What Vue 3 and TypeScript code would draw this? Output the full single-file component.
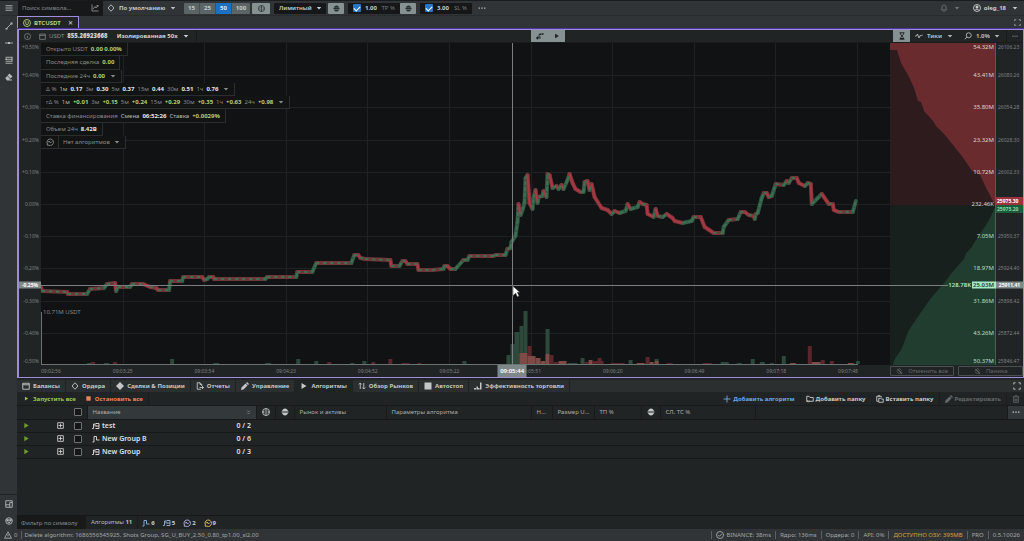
<script setup lang="ts">
import { h, ref } from 'vue'

type Glyph = { s?: string; f?: string }

const glyphs: Record<string, Glyph> = {
  menu: { s: 'M1 3.5H15M1 8H15M1 12.5H15' },
  chart: { s: 'M2 1V14H15M4 10L8 5L10 8L14 3M11 3H14V6' },
  diamond: { s: 'M8 1.5L14 8L8 14.5L2 8Z' },
  diamondFull: { f: 'M8 0L16 8L8 16L0 8Z' },
  caret: { f: 'M2 5H14L8 12Z' },
  globe: { s: 'M8 1A7 7 0 1 0 8 15A7 7 0 1 0 8 1M8 1V15M5 5.5L2.5 8L5 10.5M11 5.5L13.500 8L11 10.5' },
  robot: { f: 'M8 1C11 1 13 3 14 6H2C3 3 5 1 8 1ZM1 7H15V9H1ZM2 10H14C13 13 11 15 8 15S3 13 2 10Z' },
  dots: { f: 'M1 7H4V9.500H1ZM6.500 7H9.500V9.500H6.500ZM12 7H15V9.500H12Z' },
  bell: { s: 'M3 12H13L12 10V6C12 1 4 1 4 6V10ZM6.500 14.500H9.500' },
  user: { s: 'M8 1A7 7 0 1 0 8 15A7 7 0 1 0 8 1M3.500 13C5 9.500 11 9.500 12.500 13', f: 'M8 3A3 3 0 1 0 8 9A3 3 0 1 0 8 3' },
  expand: { s: 'M1.500 5V1.500H5M11 1.500H14.500V5M14.500 11V14.500H11M5 14.500H1.500V11' },
  line: { s: 'M3 13L13 3', f: 'M1 12H5V15H1ZM11 1H15V5H11Z' },
  hline: { s: 'M0 8H16', f: 'M6 6H10V10H6Z' },
  levels: { s: 'M1 2.500H15M1 6.500H15M1 10.500H15M1 14.500H15M14 2V10', f: 'M1 5H4V8H1Z' },
  eraser: { f: 'M9 1L15 7L11 11L5 5ZM4.500 6L10 11.500L8.500 13H14V15H4L1 11V9.500Z' },
  layout: { s: 'M1.500 1.500H14.500V14.500H1.500ZM1.500 9.500H9.500M9.500 5V14.500M9.500 5H14' },
  face: { s: 'M8 1.500A6.500 6.500 0 1 0 8 14.500A6.500 6.500 0 1 0 8 1.500M1 6H15', f: 'M4 5H7V9H4ZM9 5H12V9H9ZM5 10H11L8 13Z' },
  info: { s: 'M8 1A7 7 0 1 0 8 15A7 7 0 1 0 8 1M8 7V12M8 4V5.500' },
  wallet: { s: 'M1.500 2.500H14.500V14.500H1.500ZM1.500 5.500H14.500' },
  hourglass: { s: 'M3 1.500H13M3 14.500H13M4.500 2C4.500 6 11.500 10 11.500 14M11.500 2C11.500 6 4.500 10 4.500 14', f: 'M5 12H11V14H5Z' },
  ticks: { s: 'M0 8H3L5 4L8 12L11 6L13 8L16 5' },
  lens: { s: 'M9.500 1.500A5 5 0 1 0 9.500 11.500A5 5 0 1 0 9.500 1.500M6 10L1.500 14.500' },
  ladder: { s: 'M1 12H6V5H9M8 14V9M10 4H15M3 9V15', f: 'M1 10H4V14H1ZM7 3H10V6H7ZM12 3H15V5H12Z' },
  play: { f: 'M3 2L13 8L3 14Z' },
  square: { f: 'M1 1H15V15H1Z' },
  report: { s: 'M10 14.500H2.500V1.500H8L11.500 5V8M8 1.500V5H11.500M7 11H15M12 8L15 11L12 14' },
  pencil: { f: 'M12 0L16 4L14 6L10 2ZM9 3L13 7L5 15L0 16L1 11Z' },
  arrows: { s: 'M4.500 14V2M1.500 5L4.500 2L7.500 5M11.500 2V14M8.500 11L11.500 14L14.500 11' },
  bars: { f: 'M0 12H4V15H0ZM5 9H8V15H5ZM8 12H11V15H8ZM12 1H15V15H12Z' },
  plus: { s: 'M8 1V15M1 8H15' },
  folder: { s: 'M1.500 2.500H6L8 5H14.500V12.500H5.500M1.500 2.500V12.500H8M4 10.500L2 12.500L4 14.500' },
  paste: { s: 'M5 12.500H1.500V2.500H10.500V5M4 1.500H8M5.500 6.500H9L10.500 8H14.500V14.500H5.500Z' },
  trash: { s: 'M3.500 4.500V14.500H12.500V4.500M1.500 3.500H14.500M6 1.500H10M6.500 7V12M9.500 7V12' },
  boxPlus: { s: 'M1.500 1.500H14.500V14.500H1.500ZM8 3.500V12.500M3.500 8H12.500' },
  sort: { s: 'M4 2L8 6L12 2M4 9L8 13L12 9' },
  step: { s: 'M1 14H4V3H9V10H15' },
  group: { s: 'M0 13H3V4H6V9M8 3H14V13H8M8 8H14', f: 'M7 2H9V4H7ZM7 7H9V9H7ZM7 12H9V14H7Z' },
  wave: { s: 'M2 14L3 12A6.500 6.500 0 1 1 6 14.500ZM4 9L6.500 6L9 10L12 7' },
  warn: { s: 'M8 1.500L15 14.500H1ZM8 6V10M8 11.500V13' },
  check: { s: 'M8 1A7 7 0 1 0 8 15A7 7 0 1 0 8 1M4.500 8L7 10.500L12 5.500' },
  cut: { s: 'M2 2L14 14M3 6L8 1L13 6M2 8L8 14M7 5L12 10M10 13L14 9' },
  coin: { s: 'M8 1A7 7 0 1 0 8 15A7 7 0 1 0 8 1M5.500 4.500V9C5.500 12 10.500 12 10.500 9V4.500' },
}

const Icon = (p: { n: string }) =>
  h('svg', { viewBox: '0 0 16 16', class: 'icon', 'aria-hidden': 'true' }, [
    h('path', { d: glyphs[p.n].s ?? '', fill: 'none', stroke: 'currentColor', 'stroke-width': 1.8 }),
    h('path', { d: glyphs[p.n].f ?? '', fill: 'currentColor' }),
  ])
Icon.props = ['n']

const sizes = ['15', '25', '50', '100']
const size = ref('50')

type Part = [string, string]
const infoRows: { parts: Part[]; caret?: boolean }[] = [
  { parts: [['', 'Открыто USDT'], ['g', '0.00 0.00%']] },
  { parts: [['', 'Последняя сделка'], ['g', '0.00']] },
  { parts: [['', 'Последние 24ч'], ['g', '0.00']], caret: true },
  { parts: [['', 'Δ %'], ['l', '1м'], ['w', '0.17'], ['', '3м'], ['w', '0.30'], ['', '5м'], ['w', '0.37'], ['', '15м'], ['w', '0.44'], ['', '30м'], ['w', '0.51'], ['', '1ч'], ['w', '0.76']], caret: true },
  { parts: [['', 'rΔ %'], ['l', '1м'], ['g', '+0.01'], ['', '3м'], ['g', '+0.15'], ['', '5м'], ['g', '+0.24'], ['', '15м'], ['g', '+0.29'], ['', '30м'], ['g', '+0.35'], ['', '1ч'], ['g', '+0.63'], ['', '24ч'], ['g', '+0.98']], caret: true },
  { parts: [['', 'Ставка финансирования'], ['l', 'Смена'], ['w', '06:52:26'], ['l', 'Ставка'], ['g', '+0.0029%']] },
  { parts: [['', 'Объем 24ч'], ['w', '8.42B']] },
]

const percents = ['+0.50%', '+0.40%', '+0.30%', '+0.20%', '+0.10%', '0.00%', '-0.10%', '-0.20%', '-0.30%', '-0.40%', '-0.50%']
const times = ['09:02:56', '09:03:25', '09:03:54', '09:04:23', '09:04:52', '09:05:22', '09:05:51', '09:06:20', '09:06:49', '09:07:18', '09:07:48']
const volumes = ['54.32M', '43.41M', '35.80M', '23.32M', '10.72M', '232.46K', '7.05M', '18.97M', '31.86M', '43.26M', '50.37M']
const prices = ['26106.23', '26080.26', '26054.28', '26028.30', '26002.33', '', '25950.37', '25924.40', '25898.42', '25872.44', '25846.47']

const series: [number, number][] = [
  [0, 244], [1, 248], [26, 249], [27, 251], [46, 251], [49, 246], [63, 245], [66, 241], [74, 240], [75, 248], [77, 244], [89, 244], [91, 241], [102, 241], [109, 244], [115, 245], [117, 247], [128, 247], [129, 238], [141, 238], [142, 234], [161, 234], [163, 237], [166, 236], [168, 234], [172, 234], [173, 236],
  [224, 236], [226, 234], [255, 234], [256, 229], [271, 229], [275, 220], [310, 220], [313, 212], [317, 212], [319, 215], [324, 216], [349, 217], [350, 223], [358, 223], [361, 218], [364, 218], [366, 221], [376, 221], [377, 227], [391, 227], [402, 226], [403, 223], [406, 223], [409, 226], [414, 226], [422, 217], [426, 217], [428, 213], [452, 213], [454, 212], [464, 212],
  [466, 206], [469, 205], [470, 199], [474, 193], [476, 179], [477, 161], [479, 172], [481, 167], [483, 160], [484, 135], [486, 132], [488, 160], [491, 166], [492, 155], [494, 147], [496, 160], [497, 154], [501, 153], [502, 148], [505, 154], [506, 131], [508, 132], [511, 145], [515, 143], [517, 146], [520, 142], [522, 146], [526, 137], [528, 131], [531, 140], [534, 146], [539, 149], [542, 149], [543, 139], [546, 138], [548, 147], [550, 141], [553, 154], [560, 165], [566, 167], [570, 171], [573, 168], [578, 170], [584, 168], [586, 161], [589, 166], [596, 164], [598, 159], [601, 161], [605, 162], [606, 171], [612, 174], [614, 166], [616, 173], [621, 174], [625, 171], [631, 175], [633, 178], [641, 180], [650, 178], [652, 174], [659, 174], [663, 184], [672, 190],
  [681, 190], [682, 184], [687, 177], [696, 176], [699, 169], [703, 169], [707, 172], [712, 173], [713, 176], [714, 171], [716, 170], [720, 155], [722, 150], [725, 150], [727, 154], [730, 153], [734, 141], [742, 142], [745, 138], [747, 140], [750, 135], [755, 135], [757, 140], [763, 143], [766, 140], [769, 141], [770, 161], [780, 151], [787, 161], [791, 161], [792, 167], [797, 169], [811, 169], [814, 158],
]
const segments = series.slice(1).map((p, i) => {
  const q = series[i]
  const dy = p[1] - q[1]
  return { d: `M${q[0]} ${q[1]}L${p[0]} ${p[1]}`, kind: dy <= -2 ? 'up' : dy >= 2 ? 'down' : 'flat' }
})

const volumeBars: [number, number, number, string][] = [
  [0, 1, 5, 'r'], [46, 6, 1, 'g'], [50, 4, 2, 'r'], [63, 5, 1, 'g'], [72, 4, 2, 'r'], [129, 4, 5, 'g'], [172, 6, 1, 'g'], [224, 6, 1, 'g'], [255, 4, 5, 'g'], [273, 4, 3, 'g'], [286, 4, 2, 'r'], [309, 4, 1, 'g'], [321, 4, 3, 'g'], [330, 4, 2, 'r'], [347, 4, 5, 'r'], [360, 8, 1, 'r'], [376, 4, 1, 'r'], [421, 4, 3, 'g'],
  [465, 4, 9, 'g'], [469, 5, 20, 'g'], [473, 5, 32, 'g'], [478, 4, 38, 'g'], [482, 4, 53, 'g'], [478, 8, 11, 'm'], [486, 4, 18, 'r'], [486, 8, 8, 'm'], [494, 5, 6, 'm'], [499, 5, 3, 'm'], [504, 4, 35, 'g'], [504, 4, 10, 'm'], [508, 4, 9, 'r'], [512, 5, 2, 'r'],
  [517, 8, 3, 'm'], [526, 10, 1, 'g'], [539, 4, 6, 'g'], [543, 4, 2, 'r'], [547, 4, 4, 'm'], [551, 11, 3, 'r'], [556, 4, 6, 'r'], [569, 14, 1, 'r'], [587, 4, 4, 'g'], [595, 8, 1, 'm'], [604, 4, 7, 'r'], [608, 4, 2, 'm'], [613, 4, 5, 'g'], [613, 4, 3, 'm'], [625, 6, 1, 'r'], [661, 9, 1, 'r'], [679, 8, 2, 'g'], [695, 5, 1, 'g'], [709, 4, 5, 'g'], [718, 5, 2, 'g'], [728, 4, 1, 'g'], [740, 4, 8, 'g'], [748, 6, 1, 'm'], [766, 4, 18, 'r'], [770, 9, 2, 'm'], [779, 4, 4, 'r'], [788, 4, 3, 'r'], [806, 6, 1, 'm'], [814, 4, 3, 'g'],
]

const tabs = [
  { icon: 'wallet', label: 'Балансы' }, { icon: 'diamond', label: 'Ордера' }, { icon: 'diamondFull', label: 'Сделки & Позиции' },
  { icon: 'report', label: 'Отчеты' }, { icon: 'pencil', label: 'Управление' }, { icon: 'play', label: 'Алгоритмы' },
  { icon: 'arrows', label: 'Обзор Рынков' }, { icon: 'square', label: 'Автостоп' }, { icon: 'bars', label: 'Эффективность торговли' },
]
const activeTab = ref('Алгоритмы')

const groups = [
  { name: 'test', count: '0 / 2', icon: 'group' },
  { name: 'New Group B', count: '0 / 6', icon: 'step' },
  { name: 'New Group', count: '0 / 3', icon: 'group' },
]
const counters = [
  { icon: 'step', n: 6, tone: 'blue' }, { icon: 'group', n: 5, tone: 'blue' }, { icon: 'wave', n: 2, tone: 'lilac' }, { icon: 'wave', n: 9, tone: 'amber' },
]
</script>

<template>
  <div class="app">
    <header class="topbar">
      <button class="menu-btn" aria-label="Меню"><Icon n="menu" /></button>
      <label class="search"><input type="text" placeholder="Поиск символа..." aria-label="Поиск символа" /><Icon n="chart" /></label>
      <label class="drop preset"><Icon n="diamond" /><select aria-label="Шаблон"><option>По умолчанию</option></select><Icon n="caret" class="car" /></label>
      <div class="sizes">
        <button v-for="s in sizes" :key="s" :class="{ on: s === size }" @click="size = s">{{ s }}</button>
      </div>
      <button class="tool wide" aria-label="Валюта"><Icon n="globe" /></button>
      <label class="drop order"><select aria-label="Тип ордера"><option>Лимитный</option></select><Icon n="caret" class="car" /></label>
      <button class="tool" aria-label="Бот"><Icon n="robot" /></button>
      <div class="risk"><input type="checkbox" checked aria-label="Включить TP" /><input type="text" value="1.00" aria-label="TP %" /><span>TP %</span></div>
      <button class="tool flush" aria-label="Бот TP"><Icon n="robot" /></button>
      <div class="risk"><input type="checkbox" checked aria-label="Включить SL" /><input type="text" value="3.00" aria-label="SL %" /><span>SL %</span></div>
      <button class="more" aria-label="Ещё"><Icon n="dots" /></button>
      <button class="bell" aria-label="Уведомления"><Icon n="bell" /><Icon n="caret" class="car" /></button>
      <button class="account"><Icon n="user" />oleg_18<Icon n="caret" class="car" /></button>
    </header>

    <div class="body">
      <nav class="side" aria-label="Инструменты">
        <button aria-label="Линия"><Icon n="line" /></button>
        <button aria-label="Горизонталь"><Icon n="hline" /></button>
        <button aria-label="Уровни"><Icon n="levels" /></button>
        <button aria-label="Стереть"><Icon n="eraser" /></button>
        <div class="side-end">
          <button aria-label="Раскладка"><Icon n="layout" /></button>
          <button aria-label="Робот"><Icon n="face" /></button>
        </div>
      </nav>

      <main class="work">
        <div class="symbols">
          <div class="symbol"><Icon n="coin" /><span>BTCUSDT</span><button aria-label="Закрыть">✕</button></div>
          <button class="full" aria-label="Развернуть"><Icon n="expand" /></button>
        </div>

        <section class="frame">
          <div class="chart-bar">
            <div class="balance">
              <Icon n="info" class="dim" /><Icon n="wallet" class="dim" /><span class="cur">USDT</span><b>855.26923668</b>
              <label class="drop margin"><select aria-label="Маржа"><option>Изолированная 50x</option></select><Icon n="caret" class="car" /></label>
            </div>
            <div class="modes"><button aria-label="Лестница"><Icon n="ladder" /></button><button aria-label="Пуск"><Icon n="play" /></button></div>
            <div class="scale">
              <button class="hour" aria-label="Ожидание"><Icon n="hourglass" /></button>
              <label class="drop"><Icon n="ticks" /><select aria-label="Интервал"><option>Тики</option></select><Icon n="caret" class="car" /></label>
              <label class="drop"><Icon n="lens" /><select aria-label="Масштаб"><option>1.0%</option></select><Icon n="caret" class="car" /></label>
              <button class="opts" aria-label="Ещё"><Icon n="dots" /></button>
            </div>
          </div>

          <div class="chart">
            <div class="axis percent"><span v-for="p in percents" :key="p">{{ p }}</span><b class="mark">-0.25%</b></div>

            <div class="plot">
              <svg viewBox="0 0 848 322" preserveAspectRatio="none" role="img" aria-label="График цены BTCUSDT">
                <g class="grid">
                  <path v-for="i in 9" :key="'h' + i" :d="`M0 ${Math.round(i * 32.2)}H848`" />
                  <path v-for="i in 10" :key="'v' + i" :d="`M${Math.round(i * 81.6)} 0V322`" />
                </g>
                <rect v-for="(b, i) in volumeBars" :key="'b' + i" :x="b[0]" :y="321 - b[2]" :width="b[1]" :height="b[2]" :class="'bar-' + b[3]" />
                <path class="base" d="M0 269V321H816" />
                <path v-for="(s, i) in segments" :key="'s' + i" :d="s.d" :class="['seg', s.kind]" />
                <path v-for="(s, i) in segments" :key="'d' + i" :d="s.d" :class="['dash', s.kind]" />
              </svg>
              <div class="info">
                <div v-for="(r, i) in infoRows" :key="i" class="info-row">
                  <span v-for="(p, j) in r.parts" :key="j" :class="p[0]">{{ p[1] }}</span><Icon v-if="r.caret" n="caret" class="car" />
                </div>
                <div class="info-row algo">
                  <button aria-label="Сигналы"><Icon n="wave" /></button>
                  <label class="drop"><select aria-label="Алгоритмы"><option>Нет алгоритмов</option></select><Icon n="caret" class="car" /></label>
                </div>
              </div>
              <span class="peak">10.71M USDT</span>
            </div>

            <div class="depth">
              <svg viewBox="0 0 106 322" preserveAspectRatio="none" role="img" aria-label="Глубина рынка">
                <rect width="106" height="162" fill="#2d1b1d" /><rect y="162" width="106" height="160" fill="#17201c" />
                <path fill="#6a2b2f" d="M0 0H106V162L104 160L96 145L90 132L82 128L71 112L54 91L46 83L43 78L34 68L31 59L28 58L24 45L19 34L11 20L7 7H0Z" />
                <path fill="#213d2f" d="M106 162L104 166L101 173L96 182L89 192L81 205L76 210L74 216L64 227L54 240L41 255L31 269L21 284L18 289L14 300L11 307L4 317L3 322H106Z" />
                <rect x="105" width="1" height="162" fill="#b03a44" /><rect x="105" y="162" width="1" height="160" fill="#2f7a50" />
              </svg>
              <div class="axis vol"><span v-for="v in volumes" :key="v">{{ v }}</span></div>
              <div class="hover-vol"><b>128.78K</b><b class="hl">25.03M</b></div>
            </div>

            <div class="axis price">
              <span v-for="(p, i) in prices" :key="i">{{ p }}</span>
              <div class="quote"><b class="ask">25975.30</b><b class="bid">25975.20</b></div>
              <b class="mark">25911.41</b>
            </div>

            <div class="corner"></div>
            <div class="time-row">
              <div class="times"><span v-for="t in times" :key="t">{{ t }}</span></div>
              <b class="time-mark">09:05:44</b>
            </div>
            <div class="panic">
              <button disabled><Icon n="cut" />Отменить все</button>
              <button disabled><Icon n="cut" />Паника</button>
            </div>

            <div class="cross">
              <i class="cross-v"></i><i class="cross-h"></i>
              <svg class="pointer" viewBox="0 0 10 14"><path d="M1 1V12L4 9L6 13L8 12L6 8H9Z" fill="#fff" stroke="#111" stroke-width=".6" /></svg>
            </div>
          </div>
        </section>

        <section class="panel">
          <div class="tabs">
            <button v-for="t in tabs" :key="t.label" :class="{ on: t.label === activeTab }" @click="activeTab = t.label"><Icon :n="t.icon" />{{ t.label }}</button>
            <button class="full" aria-label="Развернуть"><Icon n="expand" /></button>
          </div>
          <div class="actions">
            <button class="run"><Icon n="play" />Запустить все</button>
            <button class="stop"><Icon n="square" />Остановить все</button>
            <span class="gap"></span>
            <button class="add"><Icon n="plus" />Добавить алгоритм</button>
            <button class="join"><Icon n="folder" />Добавить папку</button>
            <button><Icon n="paste" />Вставить папку</button>
            <button disabled><Icon n="pencil" />Редактировать</button>
            <button disabled aria-label="Удалить"><Icon n="trash" /></button>
          </div>
          <div class="table-box">
            <table>
              <colgroup><col class="c0" /><col class="c1" /><col class="c2" /><col class="c3" /><col class="c4" /><col class="c5" /><col class="c6" /><col class="c7" /><col class="c8" /><col class="c9" /><col class="c10" /><col class="c11" /><col /><col class="c13" /></colgroup>
              <thead>
                <tr>
                  <th class="nb"></th><th><input type="checkbox" aria-label="Выбрать все" /></th>
                  <th class="name"><div class="cell"><span>Название</span><Icon n="sort" /></div></th>
                  <th class="mid"><Icon n="globe" /></th><th class="mid"><Icon n="robot" /></th>
                  <th>Рынок и активы</th><th>Параметры алгоритма</th><th>Н...</th><th>Размер U...</th><th>ТП %</th>
                  <th class="mid"><Icon n="robot" /></th><th>СЛ, ТС %</th><th></th><th class="name mid"><Icon n="dots" /></th>
                </tr>
              </thead>
              <tbody>
                <tr v-for="g in groups" :key="g.name">
                  <td><div class="lead"><button class="go" :aria-label="'Запустить ' + g.name"><Icon n="play" /></button><button :aria-label="'Раскрыть ' + g.name"><Icon n="boxPlus" /></button></div></td>
                  <td><input type="checkbox" :aria-label="g.name" /></td>
                  <td><div class="cell"><Icon :n="g.icon" /><span>{{ g.name }}</span><span class="count">{{ g.count }}</span></div></td>
                  <td colspan="11"></td>
                </tr>
              </tbody>
            </table>
          </div>
          <div class="filter">
            <input type="text" placeholder="Фильтр по символу" aria-label="Фильтр по символу" />
            <span class="total">Алгоритмы <b>11</b></span>
            <span v-for="(c, i) in counters" :key="i" :class="['counter', c.tone]"><Icon :n="c.icon" /><b>{{ c.n }}</b></span>
          </div>
        </section>
      </main>
    </div>

    <footer class="status">
      <span class="warns"><Icon n="warn" />0</span>
      <span class="msg">Delete algorithm: 1686556545925, Shots Group, SG_U_BUY_2.50_0.80_tp1.00_sl2.00</span>
      <span class="st"><Icon n="check" />BINANCE: 38ms</span><span class="st">Ядро: 136ms</span><span class="st">Ордера: 0</span><span class="st">API: 0%</span>
      <span class="st ram">ДОСТУПНО ОЗУ: 395MB</span><span class="st">PRO</span><span class="st">0.5.10026</span>
    </footer>
  </div>
</template>

<style>
body { margin: 0; background: #1a1c1c; }
</style>

<style scoped>
.app { display: flex; flex-direction: column; height: 100vh; min-height: 360px; overflow: hidden; background: #212424; color: #c9cccb; font: 6px/8px "Noto Sans", "Open Sans", sans-serif; box-sizing: border-box; border-top: 1px solid #191c1d; }
.app *, .app :deep(*) { box-sizing: border-box; }
button, input, select { font: inherit; color: inherit; background: none; border: 0; border-radius: 0; padding: 0; margin: 0; min-width: 0; }
button { display: flex; align-items: center; justify-content: center; cursor: pointer; white-space: nowrap; }
input, select { outline: none; }
input::placeholder { color: #85898a; opacity: 1; }
select { appearance: none; }
option { background: #212424; }
.icon { width: 8px; height: 8px; flex: none; display: block; }
.car { width: 6px; height: 6px; }
.drop { display: flex; align-items: center; gap: 4px; font-weight: 700; }
.dim { color: #7f8384; }

.topbar { display: flex; align-items: center; flex: none; height: 15px; background: #303436; font-weight: 700; border-bottom: 1px solid #282c2d; }
.menu-btn { width: 18px; color: #b4b8b8; }
.search { display: flex; align-items: center; width: 85px; height: 15px; padding: 0 4px; background: #161819; font-weight: 400; }
.search input { flex: 1; }
.search .icon { color: #8a8f90; }
.preset { margin-left: 4px; color: #c3c7c7; }
.sizes { display: flex; margin-left: 8px; background: #5b6566; border-radius: 1px; }
.sizes button { width: 16px; height: 11px; border-right: 1px solid #464e50; color: #c7cccc; }
.sizes button:last-child { width: 18px; border: 0; }
.sizes .on { background: #1c70c2; color: #dcecff; }
.tool { width: 16px; height: 11px; margin-left: 2px; background: #869292; color: #2a3031; border-radius: 1px; }
.tool .icon { width: 7px; height: 7px; }
.wide { width: 18px; }
.flush { margin-left: 0; }
.order { width: 52px; height: 11px; padding: 0 4px 0 5px; margin-left: 4px; background: #151718; border-radius: 1px; justify-content: space-between; gap: 0; font-weight: 600; }
.risk { display: flex; align-items: center; gap: 4px; width: 52px; height: 11px; margin-left: 4px; padding: 0 5px; background: #151718; border-radius: 1px; }
.risk input[type='text'] { width: 13px; }
.risk span { color: #777b7c; font-weight: 400; white-space: nowrap; }
input[type='checkbox'] { appearance: none; display: block; width: 8px; height: 8px; border: 1px solid #6f7475; border-radius: 1px; background: #141616; }
.risk input[type='checkbox'] { flex: none; border: 0; background: #2a76c6; display: grid; place-items: center; }
.risk input[type='checkbox']::after { content: ''; width: 5px; height: 3px; border: solid #fff; border-width: 0 0 1px 1px; transform: rotate(-45deg); }
.more { margin-left: 6px; color: #a7abab; }
.bell { margin-left: auto; gap: 6px; color: #6f7475; }
.account { gap: 3px; margin: 0 6px 0 13px; }
.account .car { margin-left: 3px; }

.body { display: flex; flex: 1; min-height: 0; }
.side { display: flex; flex-direction: column; width: 17px; flex: none; padding-top: 1px; background: #303436; color: #b4b8b8; }
.side button { height: 17px; width: 100%; }
.side-end { margin-top: auto; border-top: 1px solid #212424; }
.work { display: grid; grid-template-rows: 13px minmax(0, 349fr) minmax(0, 151fr); flex: 1; min-width: 0; }

.symbols { display: flex; background: #303436; }
.symbol { display: flex; align-items: center; gap: 3px; padding: 0 5px; border: 1px solid #a18cdc; border-bottom: 0; background: #212424; color: #b5cf7a; font-weight: 700; width: 62px; }
.symbol button { margin-left: auto; color: #b4b8b8; }
.full { width: 14px; margin-left: auto; color: #a7abab; }
.full .icon { width: 7px; height: 7px; }
.frame { display: flex; flex-direction: column; border: 1px solid #a18cdc; border-left-width: 2px; background: #212424; min-height: 0; box-shadow: 0 -1px 0 #4a34a0; }
.chart-bar { position: relative; display: flex; flex: none; justify-content: space-between; height: 13px; font-weight: 700; border-bottom: 1px solid #1a1c1c; }
.balance { display: flex; align-items: center; gap: 3px; padding: 0 7px 0 5px; border-right: 1px solid #1a1c1c; color: #d0d4d4; }
.balance > .icon { width: 7px; height: 7px; margin-right: 5px; }
.balance > .icon + .icon { margin-right: 0; }
.cur { color: #8b8f90; font-weight: 400; }
.margin { margin-left: 6px; }
.modes { position: absolute; left: 51%; top: 0; height: 12px; display: flex; background: #869292; color: #1b1e1e; }
.modes button { width: 17px; }
.modes button + button .icon { width: 6px; height: 6px; }
.scale { display: flex; align-items: center; color: #b4b8b8; }
.scale .drop { padding: 0 6px 0 5px; }
.hour { width: 17px; height: 12px; background: #869292; color: #1b1e1e; }
.opts { width: 17px; height: 12px; border-left: 1px solid #1a1c1c; }
.opts .icon { width: 6px; }

.chart { position: relative; display: grid; grid-template-columns: 22px minmax(0, 848fr) minmax(0, 106fr) 27px; grid-template-rows: minmax(0, 1fr) 12px; flex: 1; min-height: 0; }
.axis { position: relative; display: grid; grid-template-rows: minmax(0, 1fr) repeat(9, minmax(0, 2fr)) minmax(0, 1fr); align-items: center; font-size: 5px; color: #7d8182; white-space: nowrap; }
.axis > span:first-child { align-self: start; }
.axis > span:last-of-type { align-self: end; }
.percent { text-align: right; padding-right: 2px; }
.mark { position: absolute; left: 0; right: 0; top: 75%; transform: translateY(-50%); background: #7f8889; color: #fff; font-weight: 700; line-height: 7px; text-align: center; }
.plot { position: relative; background: #111213; min-width: 0; }
.plot > svg, .depth > svg { display: block; width: 100%; height: 100%; position: absolute; inset: 0; }
.grid path { stroke: #1f2122; stroke-width: 1; fill: none; shape-rendering: crispEdges; }
.base { stroke: #6a7272; stroke-width: 1; fill: none; shape-rendering: crispEdges; }
.bar-g { fill: #2c493b; }
.bar-r { fill: #5b262b; }
.bar-m { fill: #7d4a45; }
.seg { fill: none; stroke-width: 4; stroke-linecap: round; }
.seg.up { stroke: #315b45; }
.seg.down { stroke: #86323a; }
.seg.flat { stroke: #6e383a; }
.dash { fill: none; stroke-width: 2; }
.dash.up { stroke: #3c7052; stroke-dasharray: 4 2; }
.dash.down { stroke: #a63a44; }
.dash.flat { stroke: #3f7052; stroke-dasharray: 3 4; }
.info { position: absolute; left: 0; top: 0; height: 33%; display: grid; grid-template-rows: repeat(8, minmax(0, 1fr)); justify-items: start; z-index: 2; color: #868a8b; }
.info-row { display: flex; align-items: center; gap: 3px; padding: 0 5px; border: 1px solid #2b2e2f; border-top-width: 0; border-left: 0; background: #121414; white-space: nowrap; }
.info-row .car { margin-left: 2px; }
.info .g { color: #b3cf74; font-weight: 700; }
.info .w { color: #e4e6e6; font-weight: 700; }
.info .l { color: #b5b9b9; }
.algo { padding: 0; gap: 0; }
.algo button { width: 18px; height: 100%; border-right: 1px solid #2b2e2f; }
.algo .drop { padding: 0 5px 0 4px; font-weight: 400; }
.algo .drop .car { margin: 0; }
.peak { position: absolute; left: 2px; top: 83%; transform: translateY(-50%); color: #85898a; margin-top: 2px; }

.depth { position: relative; }
.vol { height: 100%; text-align: right; padding-right: 2px; color: #d8d4d4; font-size: 6px; }
.vol span:nth-child(n + 7) { color: #b8dcc6; }
.hover-vol { position: absolute; right: 0; top: 75%; transform: translateY(-50%); display: flex; gap: 1px; line-height: 7px; color: #a9e6c4; font-weight: 600; z-index: 3; }
.hl { background: #a4ecc4; color: #1f3a2c; padding: 0 2px 0 1px; }
.hover-vol b { font-weight: 600; }
.price { padding-left: 2px; }
.quote { position: absolute; left: 0; right: 0; top: 50%; transform: translateY(-50%); margin-top: 1px; color: #fff; }
.quote b { display: block; font-weight: 700; padding-left: 1px; }
.ask { background: #9c3440; }
.bid { color: #7fdba6; background: #1f5a3b; }
.time-row { position: relative; padding-right: 32px; min-width: 0; }
.times { display: grid; grid-template-columns: minmax(0, 1fr) repeat(9, minmax(0, 2fr)) minmax(0, 1fr); font-size: 5px; line-height: 12px; color: #7d8182; }
.times span { justify-self: center; }
.times span:first-child { justify-self: start; }
.times span:last-child { justify-self: end; }
.time-mark { position: absolute; left: 55.5%; top: 0; transform: translateX(-50%); width: 29px; text-align: center; line-height: 12px; background: #7f8889; color: #fff; font-weight: 600; }
.panic { grid-column: 3 / 5; display: flex; gap: 4px; padding: 1px 0; }
.panic button { flex: 1; gap: 5px; border: 1px solid #4a4e4f; border-radius: 1px; color: #63696a; }
.panic .icon { width: 7px; height: 7px; }
.cross { position: absolute; left: 22px; right: 27px; top: 0; bottom: 12px; pointer-events: none; }
.cross-v { position: absolute; left: 49.3%; top: 0; bottom: 0; width: 1px; background: #7b7f80; }
.cross-h { position: absolute; left: 0; right: 48px; top: 75%; height: 1px; background: #7b7f80; }
.pointer { position: absolute; left: 49.3%; top: 75%; width: 9px; height: 13px; }

.panel { display: flex; flex-direction: column; min-height: 0; padding-top: 2px; }
.tabs { display: flex; flex: none; height: 12px; background: #2b2f30; font-weight: 700; }
.tabs button { padding: 0 5px; gap: 3px; border-right: 1px solid #202324; color: #c3c7c7; }
.tabs .icon, .actions .icon { width: 8px; height: 8px; }
.tabs .on { background: #212424; }
.tabs .full { border: 0; padding: 0; }
.actions { display: flex; flex: none; height: 14px; font-weight: 700; border-bottom: 1px solid #191b1b; }
.actions button { padding: 0 5px; gap: 2px; border-right: 1px solid #1b1e1e; }
.actions .join { border: 0; }
.actions button:last-child { width: 17px; border: 0; }
.actions .run { padding-left: 7px; gap: 4px; color: #9ecb4d; border: 0; }
.actions .stop { gap: 4px; color: #f0805c; }
.actions .run .icon, .actions .stop .icon { width: 5px; height: 5px; }
.actions .add { color: #6ea8ea; }
.actions button:disabled { color: #63696a; }
.gap { flex: 1; }
.table-box { flex: 1; min-height: 0; overflow: hidden; }
table { width: 100%; border-collapse: collapse; table-layout: fixed; }
th, td { padding: 0 5px; height: 13px; text-align: left; font-weight: 400; border-bottom: 1px solid #171919; white-space: nowrap; }
th { border-right: 1px solid #191b1b; color: #a8acad; }
th:last-child { border-right: 0; }
td { font-size: 7px; font-weight: 600; color: #dfe1e1; }
.name { background: #33383a; }
.nb { border-right: 0; }
.mid { padding: 0; color: #c3c7c7; }
.mid .icon { margin: 0 auto; }
.c0 { width: 52px; } .c1 { width: 18px; } .c2 { width: 169px; } .c3 { width: 19px; } .c4 { width: 19px; } .c5 { width: 92px; } .c6 { width: 145px; } .c7 { width: 21px; } .c8 { width: 42px; } .c9 { width: 47px; } .c10 { width: 19px; } .c11 { width: 95px; } .c13 { width: 17px; }
.cell { display: flex; align-items: center; gap: 2px; }
th .cell { justify-content: space-between; }
th .cell .icon { width: 5px; height: 5px; }
.count { margin-left: auto; }
.lead { display: flex; justify-content: space-between; align-items: center; padding-left: 1px; }
.lead .icon { width: 7px; height: 7px; }
.go { color: #6f9a2c; }
.filter { display: flex; flex: none; align-items: center; height: 14px; border-top: 1px solid #171919; color: #b9bdbd; }
.filter input { width: 69px; height: 13px; padding: 0 4px; background: #181a1a; }
.total { padding: 0 5px; border-right: 1px solid #1a1c1c; line-height: 13px; }
.total b, .counter b { font-weight: 700; }
.counter { display: flex; align-items: center; gap: 1px; padding: 0 4px; }
.counter b { color: #c9cccb; }
.blue { color: #8fb4dc; } .lilac { color: #b7b3e6; } .amber { color: #dcbf6d; }

.status { display: flex; flex: none; align-items: center; height: 12px; background: #303436; color: #a2a6a7; white-space: nowrap; }
.warns { display: flex; align-items: center; gap: 2px; padding: 0 4px; }
.msg { margin-right: auto; padding-left: 2px; border-left: 1px solid #5b6061; overflow: hidden; }
.st { display: flex; align-items: center; gap: 3px; padding: 0 4px; border-left: 1px solid #5b6061; }
.ram { color: #d9a23c; }
</style>
